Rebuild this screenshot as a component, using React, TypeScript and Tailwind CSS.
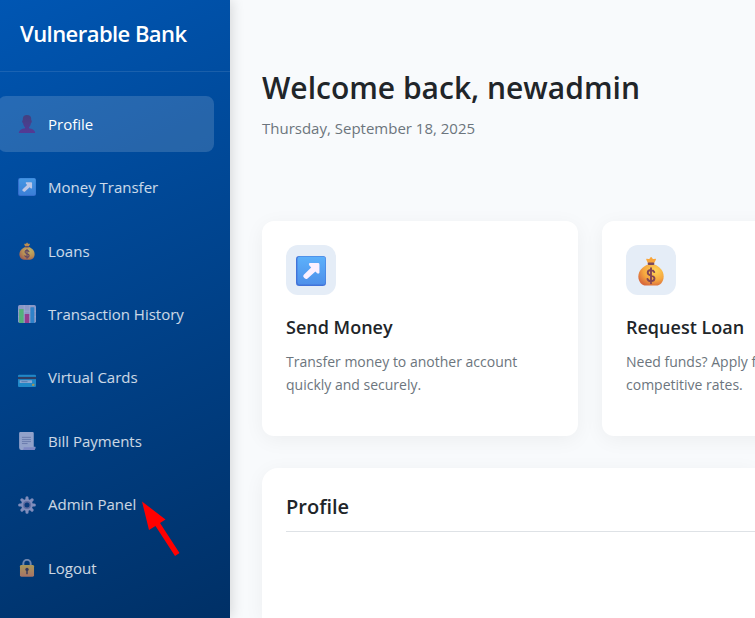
import React from "react";
import { clsx } from "clsx";

type IconProps = { className?: string };

const PersonIcon = ({ className }: IconProps) => (
  <svg viewBox="0 0 32 32" className={className} aria-hidden="true">
    <defs>
      <linearGradient id="person-skin" x1="0" y1="0" x2="0" y2="32" gradientUnits="userSpaceOnUse">
        <stop offset="0" stopColor="#4b3470" />
        <stop offset="0.7" stopColor="#5c2f86" />
        <stop offset="1" stopColor="#632a8c" />
      </linearGradient>
    </defs>
    <path d="M1.500 32c0-5 5-7.500 11-8.500V18h7v5.500c6 1 11 3.500 11 8.500z" fill="url(#person-skin)" />
    <path d="M8.500 7C8.500 2 11 0 16 0s7.500 2 7.500 7v2.500c1.700.2 1.500 4.500-.5 5-.8 5-3.500 8.500-7 8.500S9.800 19.500 9 14.500c-2-.5-2.200-4.800-.5-5z" fill="url(#person-skin)" />
  </svg>
);

const ArrowIcon = ({ className }: IconProps) => (
  <svg viewBox="0 0 32 32" className={className} aria-hidden="true">
    <defs>
      <linearGradient id="arrow-bg" x1="0" y1="0" x2="0" y2="1">
        <stop offset="0" stopColor="#5cb1fb" />
        <stop offset="1" stopColor="#4e90ea" />
      </linearGradient>
    </defs>
    <rect x="0" y="0" width="32" height="32" rx="3.500" fill="#4173d9" />
    <rect x="1.500" y="0.500" width="30" height="30" rx="3" fill="url(#arrow-bg)" />
    <path d="M14.500 7.500H23.500Q25 7.500 25 9V17.800Q24.200 19.500 22.500 18.300L20.700 16.500L12 24.300Q10.500 25 9.200 23.700L8 22.500Q7.200 21.300 8.300 20L16.200 12.300L14.200 10Q13 8.200 14.500 7.500Z" fill="#fbf0ff" />
  </svg>
);

const MoneyBagIcon = ({ className }: IconProps) => (
  <svg viewBox="0 0 32 32" className={className} aria-hidden="true">
    <defs>
      <radialGradient id="bag-body" cx="0.65" cy="0.3" r="0.75">
        <stop offset="0" stopColor="#ffd657" />
        <stop offset="0.6" stopColor="#f5a63f" />
        <stop offset="1" stopColor="#d96a3c" />
      </radialGradient>
    </defs>
    <path d="M12 3c1.500.6 2.200.3 3-1 .7-1.200 1.500-1.200 2.200 0 .8 1.300 1.500 1.600 3 1 .8-.3 1.300.3 1 1L19.200 8h-6.400L11 4c-.3-.7.2-1.300 1-1z" fill="#f9a53a" />
    <path d="M13 9h6.500c6 2 10 7 10 12.800 0 6-4 9.700-8 9.700h-11c-4 0-8-3.700-8-9.700C2.500 16 7 11 13 9z" fill="url(#bag-body)" />
    <rect x="12.500" y="7" width="7" height="2.600" rx="1" fill="#7a4a5c" />
    <path d="M19.500 17.200c-.6-1.400-1.900-2.200-3.500-2.200-2 0-3.500 1.200-3.500 2.900 0 4 7.200 1.900 7.200 5.900 0 1.900-1.600 3.100-3.700 3.100-1.900 0-3.300-.9-3.800-2.500M16 13v16" fill="none" stroke="#814555" strokeWidth="2" strokeLinecap="round" />
  </svg>
);

const ChartIcon = ({ className }: IconProps) => (
  <svg viewBox="0 0 32 32" className={className} aria-hidden="true">
    <rect width="32" height="32" rx="3" fill="#b9b4d8" />
    <path d="M0 11H32M0 21H32M11 0V32M21 0V32" stroke="#d9d3ec" strokeWidth="1" />
    <rect x="2" y="7" width="8" height="25" rx="1" fill="#6fd573" />
    <rect x="12" y="16" width="8" height="16" rx="1" fill="#c73a8e" />
    <rect x="22" y="4" width="7" height="28" rx="1" fill="#3f97dd" />
  </svg>
);

const CardIcon = ({ className }: IconProps) => (
  <svg viewBox="0 0 32 32" className={className} aria-hidden="true">
    <rect x="0" y="10" width="32" height="22" rx="2" fill="#2ba0dd" />
    <rect x="0" y="14" width="32" height="4" fill="#403a55" />
    <rect x="3" y="20" width="22" height="5" rx="1" fill="#b5c8e8" />
    <path d="M6 22.500H17" stroke="#6c86b8" strokeWidth="1.500" />
    <rect x="25" y="26" width="4" height="4" rx="1" fill="#d5b14c" />
  </svg>
);

const PageIcon = ({ className }: IconProps) => (
  <svg viewBox="0 0 32 32" className={className} aria-hidden="true">
    <path d="M4 0H26Q28 0 28 2V26H31Q31 32 27 32H6Q2 32 2 28V2Q2 0 4 0Z" fill="#c3c4e3" />
    <path d="M10 27H31Q31 32 27 32H8Q11 30 10 27Z" fill="#a8a2da" />
    <path d="M7 9.500H23M7 13.500H23M7 17H23M7 20.500H17" stroke="#8a8cb8" strokeWidth="1.600" />
  </svg>
);

const GearIcon = ({ className }: IconProps) => (
  <svg viewBox="0 0 32 32" className={className} aria-hidden="true">
    <g stroke="#aba9d2" strokeWidth="5.500" strokeLinecap="round">
      <path d="M16 3V29M3 16H29M7 7L25 25M25 7L7 25" />
    </g>
    <circle cx="16" cy="16" r="10.500" fill="#aba9d2" />
    <circle cx="16" cy="16" r="7" fill="#7c7bac" />
    <circle cx="16" cy="16" r="4.500" fill="#0d3a7c" />
  </svg>
);

const LockIcon = ({ className }: IconProps) => (
  <svg viewBox="0 0 32 32" className={className} aria-hidden="true">
    <defs>
      <linearGradient id="lock-body" x1="0" y1="0" x2="0" y2="1">
        <stop offset="0" stopColor="#e2b850" />
        <stop offset="1" stopColor="#de8862" />
      </linearGradient>
    </defs>
    <path d="M9.500 12V8a6.500 6.500 0 0 1 13 0V12" fill="none" stroke="#93a0c2" strokeWidth="3.500" />
    <rect x="3.500" y="10.500" width="25" height="21" rx="2.500" fill="url(#lock-body)" />
    <circle cx="16" cy="18.500" r="3" fill="#4b3a50" />
    <path d="M16 19V26" stroke="#4b3a50" strokeWidth="2.600" strokeLinecap="round" />
  </svg>
);

const NAV_ITEMS = [
  { href: "#profile", icon: PersonIcon, label: "Profile" },
  { href: "#transfer", icon: ArrowIcon, label: "Money Transfer" },
  { href: "#loans", icon: MoneyBagIcon, label: "Loans" },
  { href: "#transactions", icon: ChartIcon, label: "Transaction History" },
  { href: "#cards", icon: CardIcon, label: "Virtual Cards" },
  { href: "#bills", icon: PageIcon, label: "Bill Payments" },
  { href: "#admin", icon: GearIcon, label: "Admin Panel", pointed: true },
  { href: "#logout", icon: LockIcon, label: "Logout" },
];

const ACTIONS = [
  {
    icon: ArrowIcon,
    title: "Send Money",
    text: "Transfer money to another account quickly and securely.",
  },
  {
    icon: MoneyBagIcon,
    title: "Request Loan",
    text: "Need funds? Apply for a loan with competitive rates.",
  },
];

function Sidebar() {
  return (
    <aside className="relative z-10 w-[230px] shrink-0 flex flex-col bg-[linear-gradient(155deg,#0056b3,#003066)] shadow-[2px_0_12px_rgba(0,0,0,0.14)]">
      <div className="h-[72px] px-5 pb-1 flex items-center border-b border-white/10">
        <span className="text-[22px] font-semibold tracking-tight whitespace-nowrap text-white">Vulnerable Bank</span>
      </div>
      <nav className="flex-1 flex flex-col justify-between pt-6 pb-[22px] pr-4 overflow-hidden">
        {NAV_ITEMS.map((item, i) => (
          <a
            key={item.href}
            href={item.href}
            className={clsx(
              "relative -ml-0.5 h-14 pl-5 flex items-center gap-3 rounded-lg text-[15px] whitespace-nowrap",
              i === 0 ? "bg-white/15 text-white" : "text-white/80"
            )}
          >
            <item.icon className="w-[18px] h-[18px] opacity-75" />
            <span>{item.label}</span>
            {/* Pointer to the admin entry */}
            {item.pointed && (
              <svg viewBox="0 0 38 55" className="absolute left-36 top-6 w-[38px] h-[55px] z-10" aria-hidden="true">
                <path d="M0 0.500L23.500 18.500L18 22L37.500 52L33 55L13.500 25L7 29Z" fill="#ff0000" />
              </svg>
            )}
          </a>
        ))}
      </nav>
    </aside>
  );
}

export default function App() {
  return (
    <div className="flex min-h-screen overflow-hidden bg-[#f8fafc] text-[#212529] font-['Open_Sans','Noto_Sans',sans-serif]">
      <Sidebar />

      <main className="flex-1 min-w-0 flex flex-col pl-8">
        <header className="pt-16 pb-[81px]">
          <h1 className="text-[30px] leading-12 font-semibold whitespace-nowrap">Welcome back, newadmin</h1>
          <p className="mt-1 text-[15px] leading-6 text-[#6c757d]">Thursday, September 18, 2025</p>
        </header>

        {/* Quick actions */}
        <section className="flex gap-6">
          {ACTIONS.map((action) => (
            <article key={action.title} className="w-79 shrink-0 p-6 pb-10 rounded-xl bg-white shadow-[0_4px_20px_rgba(0,0,0,0.05)]">
              <div className="size-[50px] pt-0.5 flex items-center justify-center rounded-xl bg-[#e5edf7]">
                <action.icon className="size-[30px]" />
              </div>
              <h3 className="mt-5 text-lg leading-6 font-semibold">{action.title}</h3>
              <p className="mt-[11px] text-sm leading-[23px] text-[#6c757d]">{action.text}</p>
            </article>
          ))}
        </section>

        <section className="mt-8 flex-1 pl-6 pt-[25px] rounded-tl-2xl bg-white shadow-[0_4px_20px_rgba(0,0,0,0.05)]">
          <h2 className="pb-2.5 text-xl leading-7 font-semibold border-b border-[#dee2e6]">Profile</h2>
        </section>
      </main>
    </div>
  );
}
